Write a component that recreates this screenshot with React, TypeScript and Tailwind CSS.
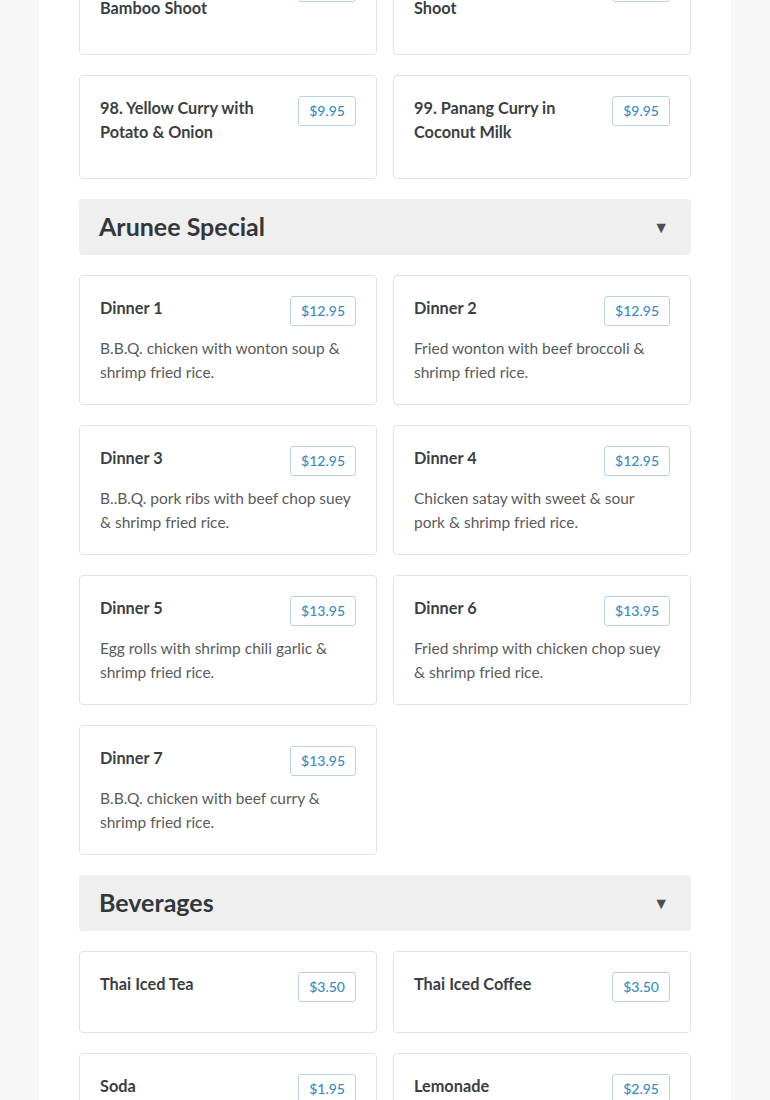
import React from "react";

type Item = { name: string; price: string; desc?: string };

const top: Item[] = [
  { name: "96. Red Curry with Bamboo Shoot", price: "$9.95" },
  { name: "97. Curry with Bamboo Shoot", price: "$9.95" },
  { name: "98. Yellow Curry with Potato & Onion", price: "$9.95" },
  { name: "99. Panang Curry in Coconut Milk", price: "$9.95" },
];

const special: Item[] = [
  { name: "Dinner 1", price: "$12.95", desc: "B.B.Q. chicken with wonton soup & shrimp fried rice." },
  { name: "Dinner 2", price: "$12.95", desc: "Fried wonton with beef broccoli & shrimp fried rice." },
  { name: "Dinner 3", price: "$12.95", desc: "B..B.Q. pork ribs with beef chop suey & shrimp fried rice." },
  { name: "Dinner 4", price: "$12.95", desc: "Chicken satay with sweet & sour pork & shrimp fried rice." },
  { name: "Dinner 5", price: "$13.95", desc: "Egg rolls with shrimp chili garlic & shrimp fried rice." },
  { name: "Dinner 6", price: "$13.95", desc: "Fried shrimp with chicken chop suey & shrimp fried rice." },
  { name: "Dinner 7", price: "$13.95", desc: "B.B.Q. chicken with beef curry & shrimp fried rice." },
];

const beverages: Item[] = [
  { name: "Thai Iced Tea", price: "$3.50" },
  { name: "Thai Iced Coffee", price: "$3.50" },
  { name: "Soda", price: "$1.95" },
  { name: "Lemonade", price: "$2.95" },
];

function Card({ item }: { item: Item }) {
  return (
    <div className="rounded-[4px] border border-[#e3e3e3] bg-white p-5">
      <div className="mb-[10px] flex items-start justify-between gap-4">
        <div className="pb-1 text-[16.3px] font-bold leading-6 text-[#3b3f44]">{item.name}</div>
        <div className="shrink-0 rounded-[3px] border border-[#b8d3e3] px-[10px] text-[14px] font-medium leading-7 text-[#3a8cc1]">
          {item.price}
        </div>
      </div>
      {item.desc && <p className="pr-[3px] text-[15.5px] leading-6 text-[#5b5b5b]">{item.desc}</p>}
    </div>
  );
}

function Header({ title }: { title: string }) {
  return (
    <div className="col-span-2 flex h-14 items-center justify-between rounded-[4px] bg-[#efefef] pl-5 pr-[22px]">
      <h2 className="text-[25px] font-bold text-[#33373c]">{title}</h2>
      <span className="text-[16px] leading-none text-[#4a4f56]">▼</span>
    </div>
  );
}

export default function App() {
  return (
    <div
      className="min-h-[1100px] bg-[#f7f7f7]"
      style={{ fontFamily: "Lato, 'Noto Sans', sans-serif" }}
    >
      <div className="mx-[39px] h-[1100px] overflow-hidden bg-white px-10">
        <div className="mt-[-49px] grid grid-cols-2 gap-x-4 gap-y-5">
          {top.map((it) => (
            <Card key={it.name} item={it} />
          ))}
          <Header title="Arunee Special" />
          {special.map((it) => (
            <Card key={it.name} item={it} />
          ))}
          <Header title="Beverages" />
          {beverages.map((it) => (
            <Card key={it.name} item={it} />
          ))}
        </div>
      </div>
    </div>
  );
}
